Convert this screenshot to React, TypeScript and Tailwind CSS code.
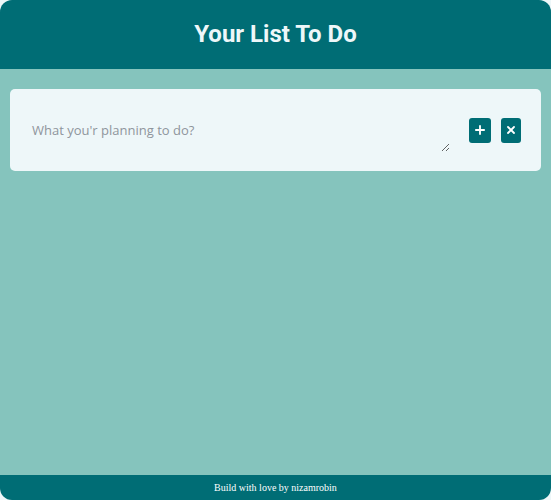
import React from 'react'
import { Plus, X } from 'lucide-react'

const App = () => {
	return (
		<div className="bg-[#eef7f9] w-[551px] h-[500px]">
			<div className="flex flex-col h-[500px] rounded-[12px] overflow-hidden">
				<header className="h-[69px] bg-[#006d75] flex items-center justify-center shrink-0">
					<h1 className="text-[#eef7f9] text-[24px] font-bold font-['Roboto',sans-serif] -mt-[1px]">
						Your List To Do
					</h1>
				</header>

				<main className="flex-1 bg-[#85c4bd] px-[10px] pt-[20px]">
					<div className="bg-[#eef7f9] rounded-[5px] h-[82px] flex items-center px-[20px]">
						<textarea
							placeholder="What you'r planning to do?"
							className="w-[420px] h-[34px] mt-[10px] p-[2px] bg-transparent outline-none border-0 text-[13px] leading-[20px] text-gray-700 placeholder:text-[#8e959c] font-['Open_Sans',sans-serif]"
						/>
						<div className="flex gap-[10px] ml-[19px]">
							<button className="w-[22px] h-[25px] bg-[#006d75] rounded-[3px] flex items-center justify-center text-white">
								<Plus size={14} strokeWidth={3.2} />
							</button>
							<button className="w-[20px] h-[25px] bg-[#006d75] rounded-[3px] flex items-center justify-center text-white">
								<X size={12} strokeWidth={3.6} />
							</button>
						</div>
					</div>
				</main>

				<footer className="h-[25px] bg-[#006d75] flex items-center justify-center shrink-0">
					<p className="text-white text-[10px] font-['Liberation_Serif',serif]">Build with love by nizamrobin</p>
				</footer>
			</div>
		</div>
	)
}

export default App
